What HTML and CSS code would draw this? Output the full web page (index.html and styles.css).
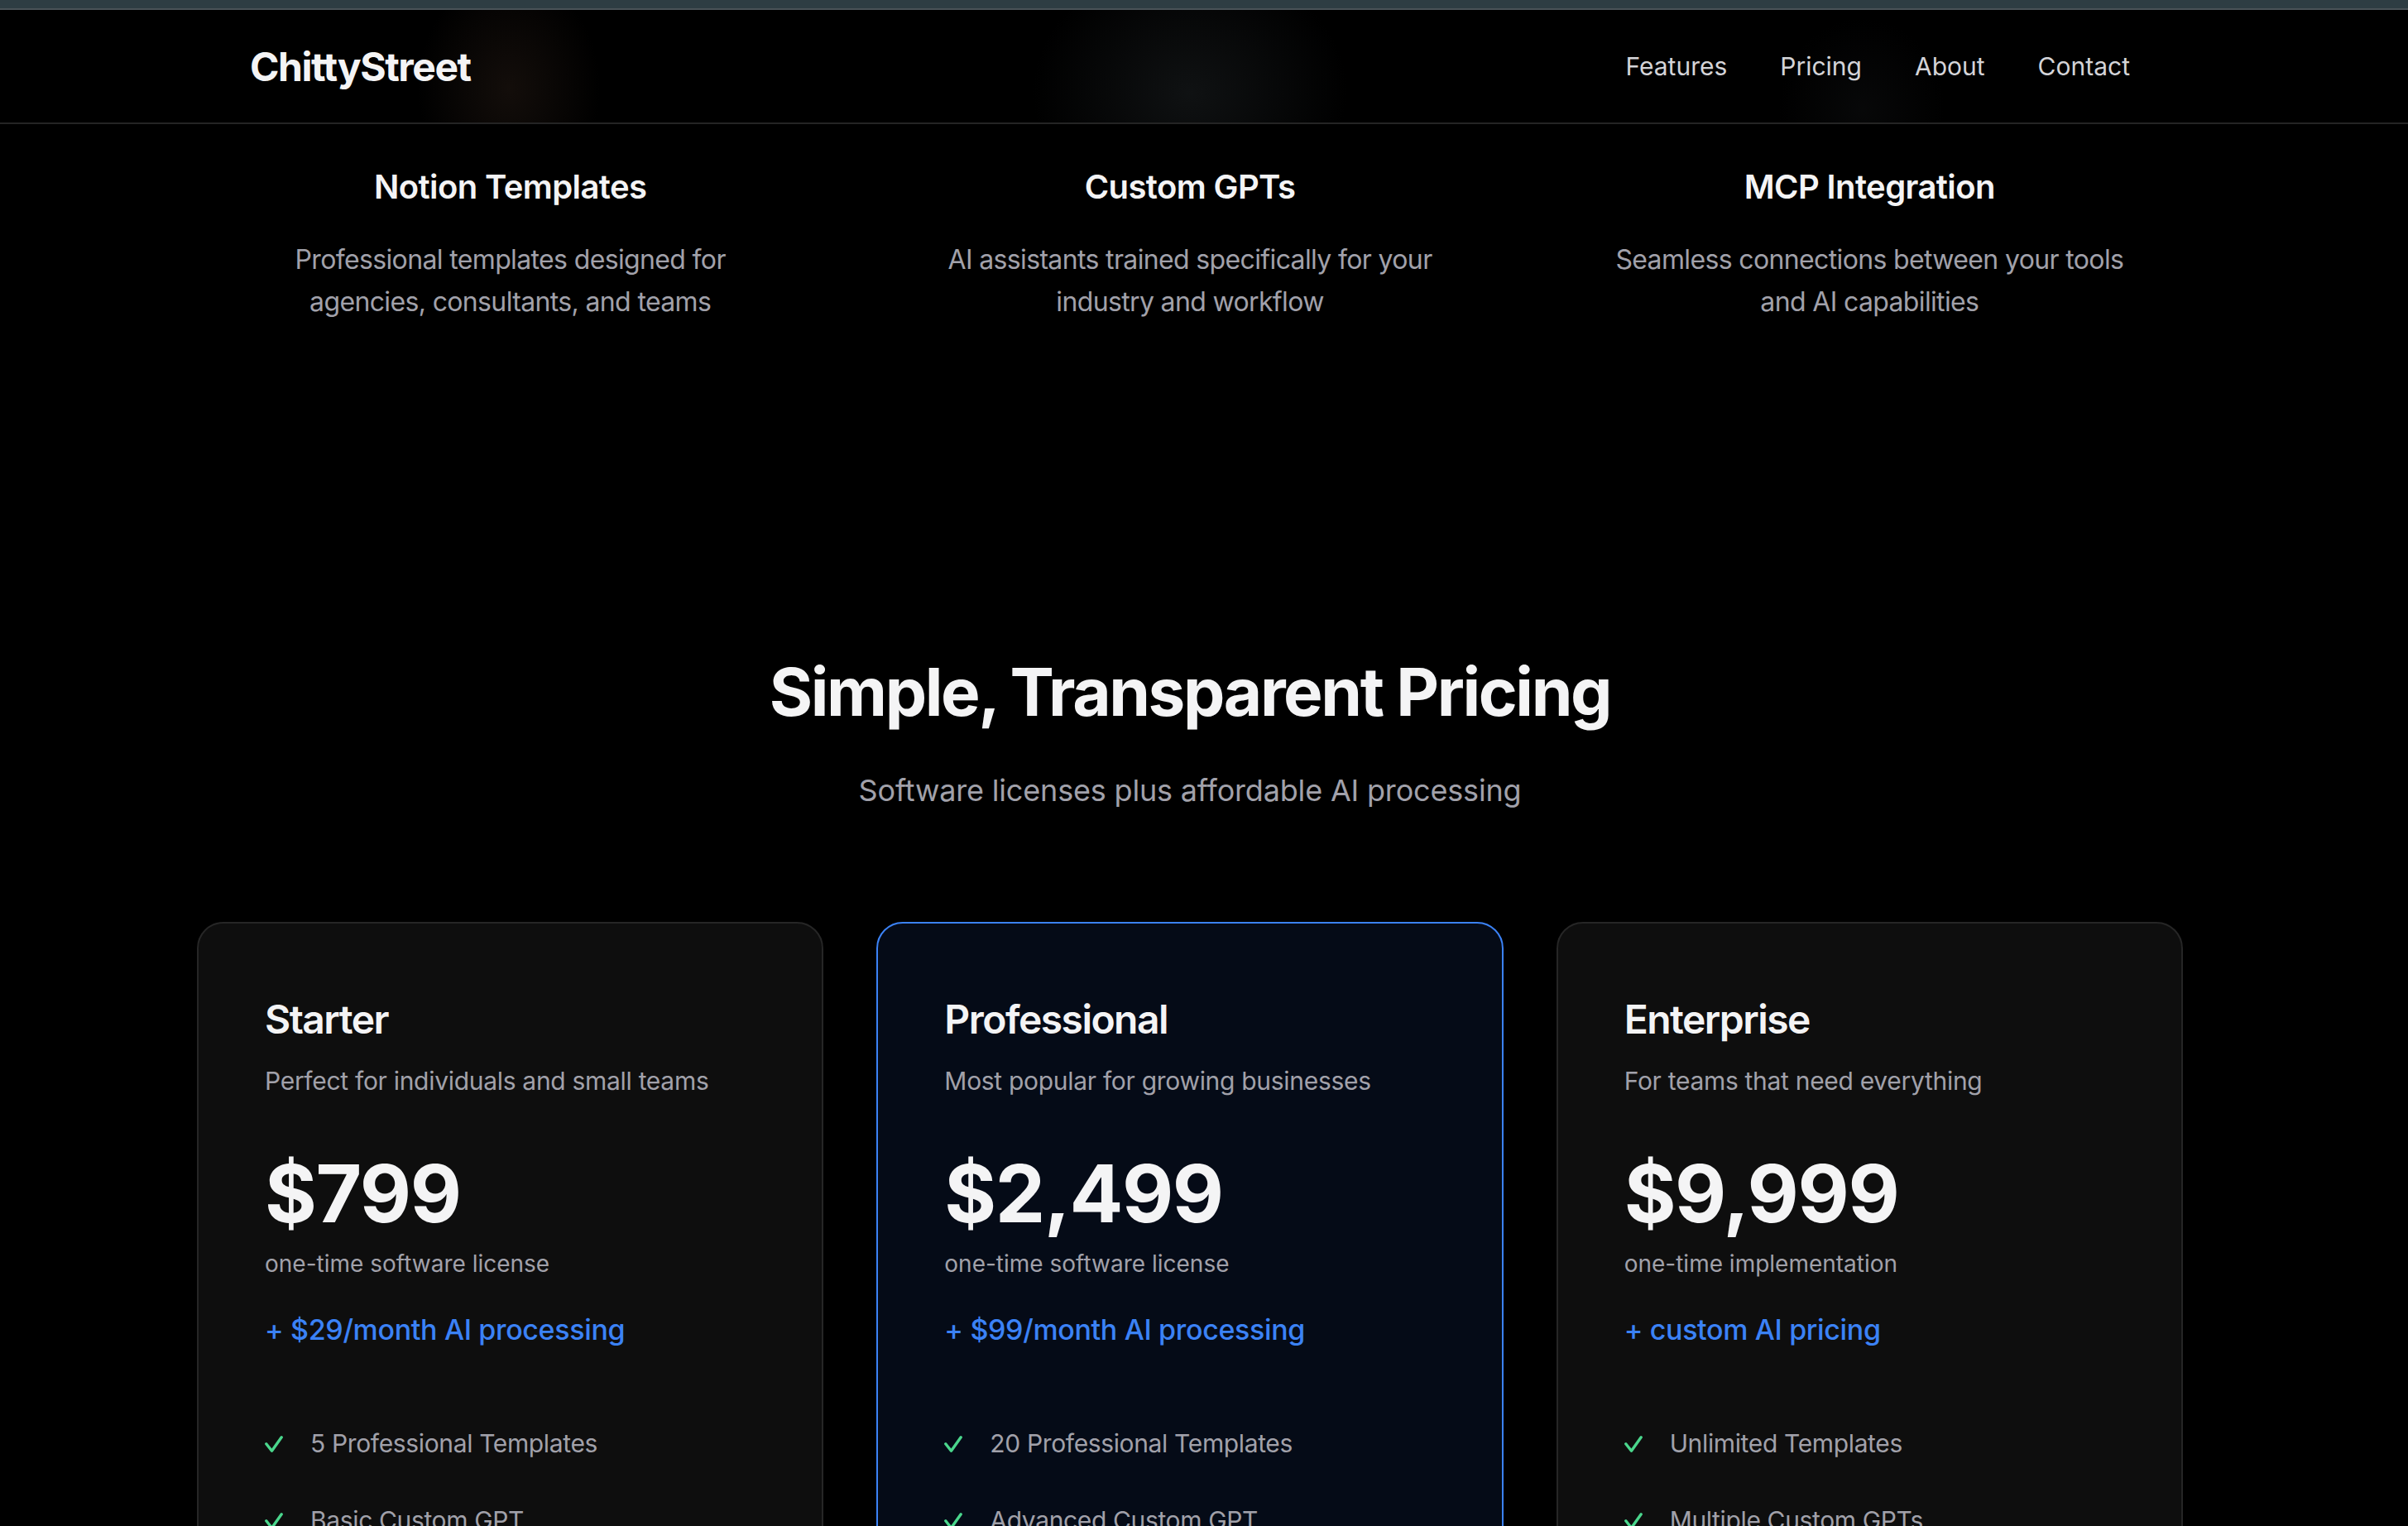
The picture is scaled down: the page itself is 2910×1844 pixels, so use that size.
FILE: index.html
```html
<!DOCTYPE html>
<html lang="en">
<head>
<meta charset="utf-8">
<title>ChittyStreet</title>
<link rel="stylesheet" href="styles.css">
</head>
<body>
<div class="topbar"></div>
<header class="site-header">
  <div class="container header-inner">
    <a class="logo" href="#">ChittyStreet</a>
    <nav class="nav">
      <a href="#">Features</a>
      <a href="#">Pricing</a>
      <a href="#">About</a>
      <a href="#">Contact</a>
    </nav>
  </div>
</header>
<main class="main">
  <section class="features">
    <div class="container features-grid">
      <div class="feature">
        <h3 class="feature-title">Notion Templates</h3>
        <p class="feature-text">Professional templates designed for agencies, consultants, and teams</p>
      </div>
      <div class="feature">
        <h3 class="feature-title">Custom GPTs</h3>
        <p class="feature-text">AI assistants trained specifically for your industry and workflow</p>
      </div>
      <div class="feature">
        <h3 class="feature-title">MCP Integration</h3>
        <p class="feature-text">Seamless connections between your tools and AI capabilities</p>
      </div>
    </div>
  </section>

  <section class="pricing">
    <div class="container">
      <h2 class="pricing-title">Simple, Transparent Pricing</h2>
      <p class="pricing-sub">Software licenses plus affordable AI processing</p>
      <div class="plans">
        <div class="plan">
          <h3 class="plan-name">Starter</h3>
          <p class="plan-desc">Perfect for individuals and small teams</p>
          <div class="plan-price">$799</div>
          <div class="plan-note">one-time software license</div>
          <div class="plan-addon">+ $29/month AI processing</div>
          <ul class="plan-list">
            <li><svg class="check" viewBox="0 0 22 20"><path d="M1.8 9.8 L8.5 18.2 L20.2 1.8"/></svg>5 Professional Templates</li>
            <li><svg class="check" viewBox="0 0 22 20"><path d="M1.8 9.8 L8.5 18.2 L20.2 1.8"/></svg>Basic Custom GPT</li>
            <li><svg class="check" viewBox="0 0 22 20"><path d="M1.8 9.8 L8.5 18.2 L20.2 1.8"/></svg>Email Support</li>
          </ul>
        </div>
        <div class="plan plan-featured">
          <h3 class="plan-name">Professional</h3>
          <p class="plan-desc">Most popular for growing businesses</p>
          <div class="plan-price">$2,499</div>
          <div class="plan-note">one-time software license</div>
          <div class="plan-addon">+ $99/month AI processing</div>
          <ul class="plan-list">
            <li><svg class="check" viewBox="0 0 22 20"><path d="M1.8 9.8 L8.5 18.2 L20.2 1.8"/></svg>20 Professional Templates</li>
            <li><svg class="check" viewBox="0 0 22 20"><path d="M1.8 9.8 L8.5 18.2 L20.2 1.8"/></svg>Advanced Custom GPT</li>
            <li><svg class="check" viewBox="0 0 22 20"><path d="M1.8 9.8 L8.5 18.2 L20.2 1.8"/></svg>Priority Support</li>
          </ul>
        </div>
        <div class="plan">
          <h3 class="plan-name">Enterprise</h3>
          <p class="plan-desc">For teams that need everything</p>
          <div class="plan-price">$9,999</div>
          <div class="plan-note">one-time implementation</div>
          <div class="plan-addon">+ custom AI pricing</div>
          <ul class="plan-list">
            <li><svg class="check" viewBox="0 0 22 20"><path d="M1.8 9.8 L8.5 18.2 L20.2 1.8"/></svg>Unlimited Templates</li>
            <li><svg class="check" viewBox="0 0 22 20"><path d="M1.8 9.8 L8.5 18.2 L20.2 1.8"/></svg>Multiple Custom GPTs</li>
            <li><svg class="check" viewBox="0 0 22 20"><path d="M1.8 9.8 L8.5 18.2 L20.2 1.8"/></svg>Dedicated Support</li>
          </ul>
        </div>
      </div>
    </div>
  </section>
</main>
</body>
</html>
```

FILE: styles.css
```css
* { box-sizing: border-box; }

html {
  scrollbar-width: none;
  background: #000;
}

body {
  margin: 0;
  background: #000;
  color: #f4f4f5;
  font-family: "Inter", "Noto Sans", "Liberation Sans", sans-serif;
  -webkit-font-smoothing: antialiased;
}

a { color: inherit; text-decoration: none; }

.topbar {
  height: 12px;
  background: #2e3d43;
  border-bottom: 2px solid #4a5358;
}

.container {
  max-width: 2400px;
  margin: 0 auto;
}

.site-header {
  padding-right: 34px;
  border-bottom: 2px solid #242424;
  background:
    radial-gradient(ellipse 110px 140px at 615px 95px, rgba(48, 34, 26, 0.4), rgba(0,0,0,0) 100%),
    radial-gradient(ellipse 190px 160px at 1438px 100px, rgba(28, 32, 34, 0.55), rgba(0,0,0,0) 100%),
    radial-gradient(ellipse 100px 110px at 2250px 120px, rgba(24, 26, 28, 0.3), rgba(0,0,0,0) 100%),
    #000;
}

.header-inner {
  height: 136px;
  padding: 0 64px;
  display: flex;
  align-items: center;
  justify-content: space-between;
}

.logo {
  font-size: 48px;
  font-weight: 700;
  letter-spacing: -0.03em;
  color: #f4f4f5;
}

.nav {
  display: flex;
  gap: 64px;
}

.nav a {
  font-size: 30px;
  color: #d4d4d8;
}

.main {
  padding-right: 34px;
}

.features {
  padding: 46px 0 200px;
}

.features-grid {
  display: grid;
  grid-template-columns: repeat(3, 1fr);
  gap: 64px;
}

.feature {
  text-align: center;
  padding: 0 56px;
}

.feature-title {
  margin: 0;
  font-size: 40px;
  line-height: 60px;
  font-weight: 600;
  letter-spacing: -0.015em;
  color: #f4f4f5;
}

.feature-text {
  margin: 32px 0 0;
  font-size: 32px;
  line-height: 51.2px;
  letter-spacing: -0.02em;
  color: #a1a1aa;
}

.pricing {
  padding-top: 198px;
}

.pricing-title {
  margin: 0;
  text-align: center;
  font-size: 80px;
  line-height: 96px;
  font-weight: 700;
  letter-spacing: -0.03em;
  color: #f4f4f5;
}

.pricing-sub {
  margin: 44px 0 0;
  text-align: center;
  font-size: 36px;
  line-height: 54px;
  letter-spacing: -0.005em;
  color: #a1a1aa;
}

.plans {
  margin-top: 132px;
  display: grid;
  grid-template-columns: repeat(3, 1fr);
  gap: 64px;
}

.plan {
  background: #0e0e0e;
  border: 2px solid #262626;
  border-radius: 32px;
  padding: 80px;
}

.plan-featured {
  background: #050b17;
  border-color: #3b82f6;
}

.plan-name {
  margin: 0;
  font-size: 48px;
  line-height: 72px;
  font-weight: 600;
  letter-spacing: -0.032em;
  color: #f4f4f5;
}

.plan-desc {
  margin: 14px 0 0;
  font-size: 30px;
  line-height: 48px;
  letter-spacing: -0.01em;
  color: #a1a1aa;
}

.plan-price {
  margin-top: 64px;
  font-size: 96px;
  line-height: 96px;
  font-weight: 700;
  letter-spacing: -0.015em;
  color: #f4f4f5;
}

.plan-note {
  margin-top: 16px;
  font-size: 28px;
  line-height: 42px;
  color: #a1a1aa;
}

.plan-addon {
  margin-top: 32px;
  font-size: 34px;
  line-height: 54px;
  font-weight: 500;
  letter-spacing: -0.01em;
  color: #3b82f6;
}

.plan-list {
  list-style: none;
  margin: 64px 0 0;
  padding: 0;
}

.plan-list li {
  display: flex;
  align-items: center;
  gap: 33px;
  padding: 24px 0;
  font-size: 30px;
  line-height: 45px;
  letter-spacing: -0.012em;
  color: #a1a1aa;
}

.check {
  width: 22px;
  height: 20px;
  flex: none;
  fill: none;
  stroke: #4ad68c;
  stroke-width: 3.4;
  stroke-linecap: round;
  stroke-linejoin: round;
}
```
